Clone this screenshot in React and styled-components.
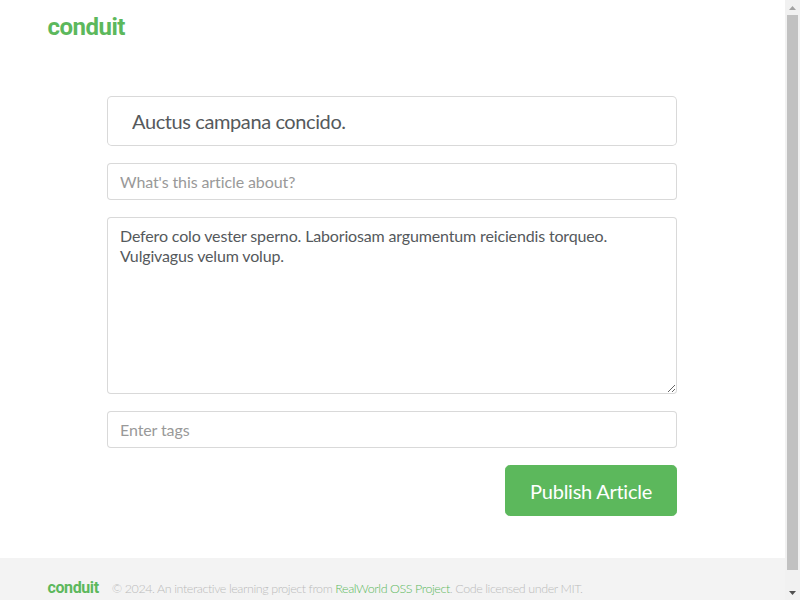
import React from 'react';
import styled, { createGlobalStyle } from 'styled-components';

const GlobalStyle = createGlobalStyle`
  html, body {
    margin: 0;
    padding: 0;
    background: #fff;
  }
  body {
    font-family: Lato, "Liberation Sans", sans-serif;
    color: #373a3c;
  }
  * { box-sizing: border-box; }
`;

// window frame: the page area plus the browser's scrollbar column
const Shell = styled.div`
  display: flex;
  height: 100vh;
  overflow: hidden;
`;

const Viewport = styled.div`
  flex: 1;
  min-width: 0;
  overflow: hidden;
`;

const ScrollBar = styled.div`
  width: 15px;
  flex-shrink: 0;
  display: flex;
  flex-direction: column;
  background: #f1f1f1;
`;

const ScrollArrow = styled.div`
  height: 15px;
  display: flex;
  align-items: center;
  justify-content: center;
`;

const ScrollTrack = styled.div`
  flex: 1;
  padding: 0 2px;
`;

const ScrollThumb = styled.div`
  height: 555px;
  background: #c1c1c1;
`;

const Container = styled.div`
  width: 720px;
  margin: 0 auto;
  padding: 0 15px;
`;

const Nav = styled.nav`
  padding: 8px 0;
`;

const Brand = styled.a`
  display: inline-block;
  font-family: Roboto, "Noto Sans", sans-serif;
  font-weight: 700;
  font-size: ${(p) => (p.$small ? '16px' : '24px')};
  line-height: ${(p) => (p.$small ? '24px' : '38px')};
  letter-spacing: ${(p) => (p.$small ? '-0.4px' : '-0.5px')};
  color: #5cb85c;
  text-decoration: none;
  margin-right: ${(p) => (p.$small ? '13px' : '0')};
`;

const Page = styled.div`
  padding-top: 42px;
  padding-bottom: 42px;
`;

const Column = styled.div`
  width: 570px;
  margin-left: 59.5px;
`;

const Form = styled.form`
  display: flex;
  flex-direction: column;
  gap: 17px;
`;

const Field = styled.input`
  display: block;
  width: 100%;
  height: ${(p) => (p.$large ? '50px' : '37px')};
  padding: ${(p) => (p.$large ? '8px 24px' : '8px 12px')};
  font-family: Lato, "Liberation Sans", sans-serif;
  font-size: ${(p) => (p.$large ? '20px' : '16px')};
  letter-spacing: ${(p) => (p.$large ? '-0.4px' : '-0.1px')};
  color: #55595c;
  background: #fff;
  border: 1px solid rgba(0, 0, 0, 0.15);
  border-radius: ${(p) => (p.$large ? '4.8px' : '4px')};
  outline: none;
  &::placeholder {
    color: #999;
  }
`;

const Body = styled.textarea`
  display: block;
  width: 100%;
  height: 177px;
  padding: 8px 12px;
  font-family: Lato, "Liberation Sans", sans-serif;
  font-size: 16px;
  line-height: 20px;
  letter-spacing: -0.15px;
  color: #55595c;
  border: 1px solid rgba(0, 0, 0, 0.15);
  border-radius: 4px;
  resize: vertical;
  outline: none;
`;

const Actions = styled.div`
  display: flex;
  justify-content: flex-end;
`;

const PublishButton = styled.button`
  height: 51px;
  padding: 0 24px;
  font-family: Lato, "Liberation Sans", sans-serif;
  font-size: 20px;
  letter-spacing: -0.25px;
  color: #fff;
  background: #5cb85c;
  border: 1px solid #5cb85c;
  border-radius: 4.8px;
  cursor: pointer;
`;

const Footer = styled.footer`
  background: #f3f3f3;
  padding: 18px 0 14px;
`;

const FooterRow = styled.div`
  display: flex;
  align-items: baseline;
`;

const Attribution = styled.span`
  font-size: 12.5px;
  font-weight: 300;
  letter-spacing: -0.42px;
  color: #bbb;
  a {
    color: #5cb85c;
    text-decoration: none;
  }
`;

const Arrow = ({ down, color }) => (
  <svg width="7" height="4" viewBox="0 0 7 4">
    <path d={down ? 'M0 0h7L3.5 4z' : 'M0 4h7L3.5 0z'} fill={color} />
  </svg>
);

export default function App() {
  return (
    <>
      <GlobalStyle />
      <Shell>
        <Viewport>
          <Nav>
            <Container>
              <Brand href="#/">conduit</Brand>
            </Container>
          </Nav>
          <Page>
            <Container>
              <Column>
                <Form onSubmit={(e) => e.preventDefault()}>
                  <Field $large type="text" placeholder="Article Title" defaultValue="Auctus campana concido." />
                  <Field type="text" placeholder="What's this article about?" />
                  <Body
                    rows={8}
                    placeholder="Write your article (in markdown)"
                    defaultValue={'Defero colo vester sperno. Laboriosam argumentum reiciendis torqueo.\nVulgivagus velum volup.'}
                  />
                  <Field type="text" placeholder="Enter tags" />
                  <Actions>
                    <PublishButton type="submit">Publish Article</PublishButton>
                  </Actions>
                </Form>
              </Column>
            </Container>
          </Page>
          <Footer>
            <Container>
              <FooterRow>
                <Brand $small href="#/">conduit</Brand>
                <Attribution>
                  © 2024. An interactive learning project from <a href="#/">RealWorld OSS Project</a>. Code licensed under MIT.
                </Attribution>
              </FooterRow>
            </Container>
          </Footer>
        </Viewport>
        <ScrollBar>
          <ScrollArrow>
            <Arrow color="#a3a3a3" />
          </ScrollArrow>
          <ScrollTrack>
            <ScrollThumb />
          </ScrollTrack>
          <ScrollArrow>
            <Arrow down color="#505050" />
          </ScrollArrow>
        </ScrollBar>
      </Shell>
    </>
  );
}
